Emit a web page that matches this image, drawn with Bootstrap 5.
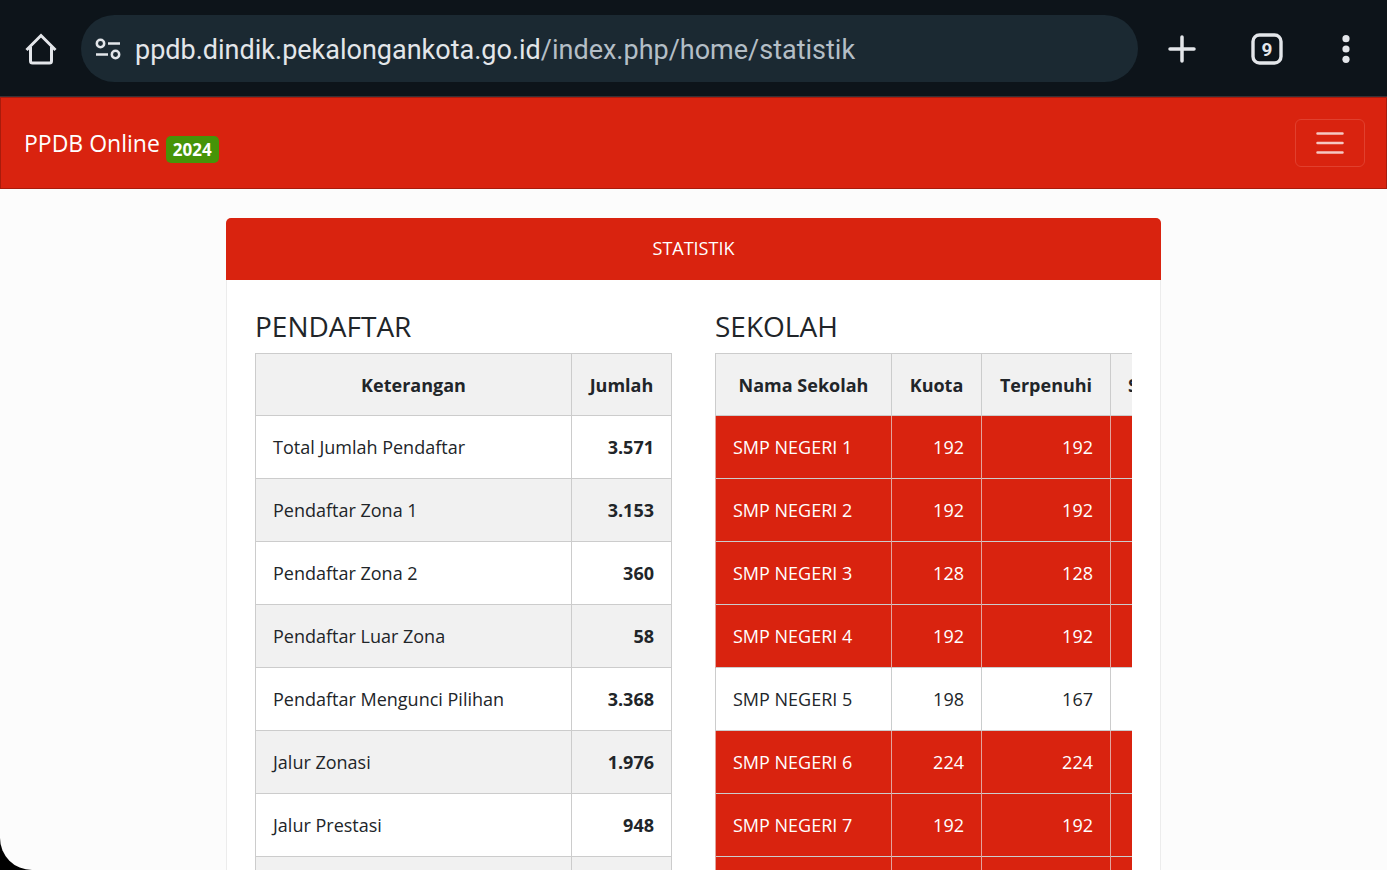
<!DOCTYPE html>
<html lang="id">
<head>
<meta charset="utf-8">
<meta name="viewport" content="width=device-width, initial-scale=1">
<title>PPDB Online</title>
<link href="https://cdn.jsdelivr.net/npm/bootstrap@5.3.0/dist/css/bootstrap.min.css" rel="stylesheet">
<style>
  body { background: #000; font-family: "Open Sans", "Noto Sans", sans-serif; font-size: 18px; line-height: 26px; color: #212529; }
  .device { background: #fcfcfc; border-bottom-left-radius: 32px; }
  .browser-bar { background: #0d141a; border-bottom: 1px solid #3a3036; padding: 15px 32px 14px 24px; color: #e3e6ea; }
  .browser-bar .btn { color: inherit; border: 0; }
  .address { background: #1b2932; height: 67px; padding: 0 14px; margin-left: 23px; gap: 14px; font-family: Roboto, sans-serif; }
  .address-text { font-size: 27px; line-height: 40px; padding-top: 2px; }
  .address-text .path { color: #b4bec6; }
  .bar-actions { gap: 54px; margin-left: 29px; }
  .site-nav { background: #d9230f; border: 1px solid #a91b0c; padding: 21px 21px 21px 23px; }
  .site-nav .navbar-brand { font-size: 23px; line-height: 38px; padding: 4px 0; }
  .site-nav .badge { background: #469408; font-size: 17px; line-height: 17px; padding: 5px 7px; border-radius: 5px; vertical-align: -4px; }
  .site-nav .navbar-toggler { border: 1px solid #e1402e; border-radius: 6px; padding: 5px 16px; font-size: 18px; }
  .main-col { max-width: 935px; padding-top: 29px; }
  .stat-card { border: 1px solid #ececec; border-radius: 6px; }
  .stat-card .card-header { background: #d9230f; padding: 17px 18px 19px; border: 0; margin: -1px -1px 0; border-radius: 5px 5px 0 0; }
  .stat-card .card-body { padding: 29px 28px; }
  .tables { --bs-gutter-x: 43px; }
  .tables h2 { font-size: 28px; line-height: 34px; margin-bottom: 10px; font-weight: 400; }
  .stat-table { border-color: #ccc; }
  .stat-table th, .stat-table td { padding: 18px 17px; white-space: nowrap; }
  .stat-table thead th { background: #f1f1f1; text-align: center; padding-bottom: 17px; }
  .stat-table tbody td:last-child { height: 63px; }
  .stat-table .alt td { background: #f1f1f1; }
  .stat-table .full-row td { background: #d9230f; color: #fff; border-color: #e3a39c; }
  .col-total { width: 100px; }
  .col-school { min-width: 176px; }
  .col-quota { min-width: 90px; }
  .col-filled { min-width: 129px; }
  .school-scroll { overflow: hidden; }
</style>
</head>
<body>
<div class="device vh-100 overflow-hidden">
  <header class="browser-bar d-flex align-items-center">
    <button class="btn p-0 d-flex" type="button" aria-label="Home">
      <svg width="34" height="34" viewBox="0 0 34 34" fill="none" stroke="currentColor" stroke-width="3"><path d="M2.500 18 17 3.500 31.500 18M6.500 15V29a2 2 0 0 0 2 2H25.500a2 2 0 0 0 2-2V15"/></svg>
    </button>
    <div class="address rounded-pill flex-grow-1 d-flex align-items-center">
      <button class="btn p-0 d-flex" type="button" aria-label="Info situs">
        <svg width="26" height="26" viewBox="0 0 26 26" fill="none" stroke="currentColor" stroke-width="2.500"><circle cx="5.500" cy="7.500" r="3.700"/><path d="M13 7.500h12M1 18.500h12"/><circle cx="20.500" cy="18.500" r="3.700"/></svg>
      </button>
      <div class="address-text text-nowrap" role="textbox" contenteditable="true" spellcheck="false" aria-label="Alamat">ppdb.dindik.pekalongankota.go.id<span class="path">/index.php/home/statistik</span></div>
    </div>
    <div class="bar-actions d-flex align-items-center">
      <button class="btn p-0 d-flex" type="button" aria-label="Tab baru">
        <svg width="30" height="30" viewBox="0 0 30 30" stroke="currentColor" stroke-width="3.500" stroke-linecap="round"><path d="M15 3v24M3 15h24"/></svg>
      </button>
      <button class="btn p-0 d-flex" type="button" aria-label="9 tab">
        <svg width="32" height="32" viewBox="0 0 32 32"><rect x="2" y="2" width="28" height="28" rx="6.500" fill="none" stroke="currentColor" stroke-width="3.400"/><text x="16" y="22.500" text-anchor="middle" fill="currentColor" font-family="Roboto" font-size="19" font-weight="700">9</text></svg>
      </button>
      <button class="btn p-0 d-flex" type="button" aria-label="Menu browser">
        <svg width="18" height="30" viewBox="0 0 18 30" fill="currentColor"><circle cx="9" cy="4.700" r="3.600"/><circle cx="9" cy="15" r="3.600"/><circle cx="9" cy="25.300" r="3.600"/></svg>
      </button>
    </div>
  </header>

  <nav class="site-nav navbar navbar-dark">
    <a class="navbar-brand m-0" href="#">PPDB Online <span class="badge">2024</span></a>
    <button class="navbar-toggler" type="button" aria-label="Menu">
      <svg class="d-block" width="36" height="36" viewBox="0 0 36 36" stroke="#fff" stroke-opacity=".75" stroke-width="2.500" stroke-linecap="round"><path d="M5.500 8.500h25M5.500 18h25M5.500 27.500h25"/></svg>
    </button>
  </nav>

  <main class="main-col mx-auto">
    <section class="stat-card card">
      <div class="card-header text-center text-white">STATISTIK</div>
      <div class="card-body">
        <div class="row tables">
          <div class="col-6">
            <h2>PENDAFTAR</h2>
            <table class="table table-bordered stat-table">
              <thead><tr><th>Keterangan</th><th class="col-total">Jumlah</th></tr></thead>
              <tbody>
                <tr><td>Total Jumlah Pendaftar</td><td class="text-end fw-bold">3.571</td></tr>
                <tr class="alt"><td>Pendaftar Zona 1</td><td class="text-end fw-bold">3.153</td></tr>
                <tr><td>Pendaftar Zona 2</td><td class="text-end fw-bold">360</td></tr>
                <tr class="alt"><td>Pendaftar Luar Zona</td><td class="text-end fw-bold">58</td></tr>
                <tr><td>Pendaftar Mengunci Pilihan</td><td class="text-end fw-bold">3.368</td></tr>
                <tr class="alt"><td>Jalur Zonasi</td><td class="text-end fw-bold">1.976</td></tr>
                <tr><td>Jalur Prestasi</td><td class="text-end fw-bold">948</td></tr>
                <tr class="alt"><td></td><td></td></tr>
              </tbody>
            </table>
          </div>
          <div class="col-6">
            <h2>SEKOLAH</h2>
            <div class="school-scroll">
              <table class="table table-bordered stat-table">
                <thead><tr><th class="col-school">Nama Sekolah</th><th class="col-quota">Kuota</th><th class="col-filled">Terpenuhi</th><th>Sisa</th></tr></thead>
                <tbody>
                  <tr class="full-row"><td>SMP NEGERI 1</td><td class="text-end">192</td><td class="text-end">192</td><td></td></tr>
                  <tr class="full-row"><td>SMP NEGERI 2</td><td class="text-end">192</td><td class="text-end">192</td><td></td></tr>
                  <tr class="full-row"><td>SMP NEGERI 3</td><td class="text-end">128</td><td class="text-end">128</td><td></td></tr>
                  <tr class="full-row"><td>SMP NEGERI 4</td><td class="text-end">192</td><td class="text-end">192</td><td></td></tr>
                  <tr><td>SMP NEGERI 5</td><td class="text-end">198</td><td class="text-end">167</td><td></td></tr>
                  <tr class="full-row"><td>SMP NEGERI 6</td><td class="text-end">224</td><td class="text-end">224</td><td></td></tr>
                  <tr class="full-row"><td>SMP NEGERI 7</td><td class="text-end">192</td><td class="text-end">192</td><td></td></tr>
                  <tr class="full-row"><td></td><td></td><td></td><td></td></tr>
                </tbody>
              </table>
            </div>
          </div>
        </div>
      </div>
    </section>
  </main>
</div>
<script src="https://cdn.jsdelivr.net/npm/bootstrap@5.3.0/dist/js/bootstrap.bundle.min.js"></script>
</body>
</html>
